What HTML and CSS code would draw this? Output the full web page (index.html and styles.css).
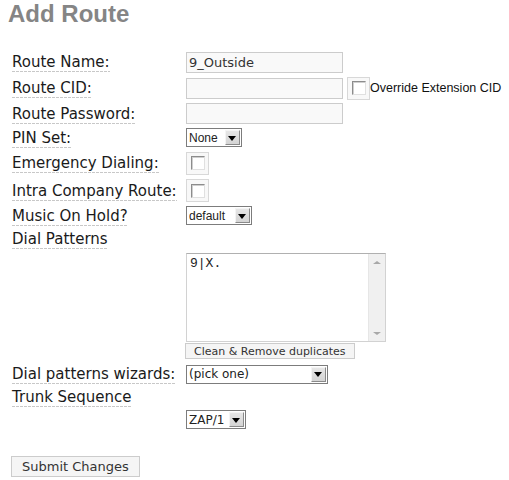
FILE: index.html
```html
<!DOCTYPE html>
<html>
<head>
    <meta charset="UTF-8">
    <title>Add Route</title>
    <link rel="stylesheet" href="styles.css">
</head>
<body>
    <div class="page">
        <h2 class="title">Add Route</h2>
        <form class="route-form">
            <div class="grid">
                <div class="lbl"><span>Route Name:</span></div>
                <div class="fld"><input type="text" class="txt" name="routename" value="9_Outside"></div>

                <div class="lbl"><span>Route CID:</span></div>
                <div class="fld">
                    <input type="text" class="txt" name="outcid">
                    <span class="cbox"><input type="checkbox" class="chk" name="outcid_mode"></span>
                    <span class="cbox-text">Override Extension CID</span>
                </div>

                <div class="lbl"><span>Route Password:</span></div>
                <div class="fld"><input type="password" class="txt" name="routepass"></div>

                <div class="lbl"><span>PIN Set:</span></div>
                <div class="fld">
                    <span class="sel"><select class="sel-arial w-none"><option>None</option></select></span>
                </div>

                <div class="lbl"><span>Emergency Dialing:</span></div>
                <div class="fld"><span class="cbox"><input type="checkbox" class="chk" name="emergency"></span></div>

                <div class="lbl"><span>Intra Company Route:</span></div>
                <div class="fld"><span class="cbox"><input type="checkbox" class="chk" name="intracompany"></span></div>

                <div class="lbl"><span>Music On Hold?</span></div>
                <div class="fld">
                    <span class="sel"><select class="sel-arial w-default"><option>default</option></select></span>
                </div>

                <div class="lbl"><span>Dial Patterns</span></div>
                <div class="fld"></div>

                <div class="lbl"></div>
                <div class="fld fld-top">
                    <div class="pattern-box">
                        <textarea class="patterns" name="dialpattern">9|X.</textarea>
                        <div class="vscroll">
                            <span class="arr arr-up"></span>
                            <span class="arr arr-down"></span>
                        </div>
                    </div>
                    <button type="button" class="btn-clean">Clean &amp; Remove duplicates</button>
                </div>

                <div class="lbl"><span>Dial patterns wizards:</span></div>
                <div class="fld">
                    <span class="sel"><select class="w-wizard"><option>(pick one)</option></select></span>
                </div>

                <div class="lbl"><span>Trunk Sequence</span></div>
                <div class="fld"></div>

                <div class="lbl"></div>
                <div class="fld">
                    <span class="sel"><select class="w-zap"><option>ZAP/1</option></select></span>
                </div>
            </div>
            <button type="submit" class="btn-submit">Submit Changes</button>
        </form>
    </div>
</body>
</html>
```

FILE: styles.css
```css
body {
    margin: 0;
    background-color: #fff;
    font-family: "DejaVu Sans", Verdana, sans-serif;
    color: #1a1a1a;
}
.page {
    padding: 0 8px;
}
.title {
    margin: 0;
    font-family: "Liberation Sans", Arial, sans-serif;
    font-size: 24px;
    font-weight: bold;
    color: #858585;
}
.route-form {
    margin-top: 21px;
}
.grid {
    display: grid;
    grid-template-columns: 174px 1fr;
    grid-template-rows: 26px 26px 25px 23px 28px 27px 23px 24px 107px 32px 14px 31px;
    align-items: center;
    padding-left: 4px;
}
.lbl span {
    display: inline-block;
    font-size: 15px;
    background: repeating-linear-gradient(to right, #c8c8c8 0 3px, transparent 3px 4px) left bottom / 100% 1px no-repeat;
    padding-bottom: 1px;
}
.fld {
    display: flex;
    align-items: center;
}
.fld-top {
    align-self: start;
    flex-direction: column;
    align-items: flex-start;
    padding-top: 2px;
}
.txt {
    box-sizing: border-box;
    width: 157px;
    height: 21px;
    margin: 0;
    padding: 0 2px;
    border: 1px solid #cccccc;
    background-color: #f9f9f9;
    font-family: "DejaVu Sans", Verdana, sans-serif;
    font-size: 13px;
    color: #333;
}
.cbox {
    box-sizing: border-box;
    display: inline-flex;
    align-items: center;
    justify-content: center;
    flex: none;
    width: 23px;
    height: 23px;
    border: 1px solid #d8d8d8;
    background-color: #f8f8f8;
}
.fld .txt + .cbox {
    margin-left: 4px;
}
.chk {
    appearance: none;
    -webkit-appearance: none;
    box-sizing: border-box;
    width: 14px;
    height: 14px;
    margin: 0;
    border: 1px solid;
    border-color: #8c8c8c #e0e0e0 #e0e0e0 #8c8c8c;
    background-color: #fff;
    box-shadow: inset 1px 1px 0 #cfcfcf;
}
.cbox-text {
    font-family: "Liberation Sans", Arial, sans-serif;
    font-size: 12.5px;
    color: #111;
    white-space: nowrap;
}
.sel {
    position: relative;
    display: inline-block;
    line-height: 0;
}
.sel select {
    appearance: none;
    -webkit-appearance: none;
    box-sizing: border-box;
    height: 19px;
    margin: 0;
    padding: 0 18px 0 2px;
    border: 1px solid #7c7c7c;
    border-radius: 0;
    background-color: #fff;
    font-family: "DejaVu Sans", Verdana, sans-serif;
    font-size: 12px;
    color: #222;
}
.sel select.sel-arial {
    font-family: "Liberation Sans", Arial, sans-serif;
}
.sel::before {
    content: "";
    position: absolute;
    top: 2px;
    right: 2px;
    bottom: 2px;
    width: 15px;
    box-sizing: border-box;
    border: 1px solid;
    border-color: #f4f4f4 #8a8a8a #8a8a8a #f4f4f4;
    background: linear-gradient(#e6e6e6, #d4d4d4);
    pointer-events: none;
}
.sel::after {
    content: "";
    position: absolute;
    top: 50%;
    right: 6px;
    margin-top: -2px;
    border-left: 4px solid transparent;
    border-right: 4px solid transparent;
    border-top: 5px solid #000;
    pointer-events: none;
}
.w-none {
    width: 56px;
}
.w-default {
    width: 66px;
}
.w-wizard {
    width: 142px;
}
.w-zap {
    width: 60px;
}
.pattern-box {
    box-sizing: border-box;
    display: flex;
    width: 200px;
    height: 89px;
    border: 1px solid #d2d2d2;
    border-top-color: #b0b0b0;
    background-color: #fff;
}
.patterns {
    flex: 1;
    min-width: 0;
    margin: 0;
    padding: 2px 3px;
    border: 0;
    outline: none;
    resize: none;
    overflow: hidden;
    font-family: "Liberation Mono", "Courier New", monospace;
    font-size: 13px;
    color: #222;
}
.vscroll {
    display: flex;
    flex-direction: column;
    justify-content: space-between;
    align-items: center;
    width: 17px;
    padding: 7px 0 6px;
    box-sizing: border-box;
    background-color: #f0f0f0;
    border-left: 1px solid #e6e6e6;
}
.arr {
    width: 0;
    height: 0;
    border-left: 4px solid transparent;
    border-right: 4px solid transparent;
}
.arr-up {
    border-bottom: 3px solid #a8a8a8;
}
.arr-down {
    border-top: 3px solid #a8a8a8;
}
.btn-clean {
    box-sizing: border-box;
    height: 16px;
    margin: 1px 0 0 -1px;
    padding: 0 8px;
    border: 1px solid #cccccc;
    background-color: #f5f5f5;
    font-family: "DejaVu Sans", Verdana, sans-serif;
    font-size: 11px;
    line-height: 13px;
    color: #333;
}
.btn-submit {
    box-sizing: border-box;
    height: 21px;
    margin: 21px 0 0 3px;
    padding: 0 10px;
    border: 1px solid #cccccc;
    background-color: #f5f5f5;
    font-family: "DejaVu Sans", Verdana, sans-serif;
    font-size: 13px;
    color: #333;
}
```
